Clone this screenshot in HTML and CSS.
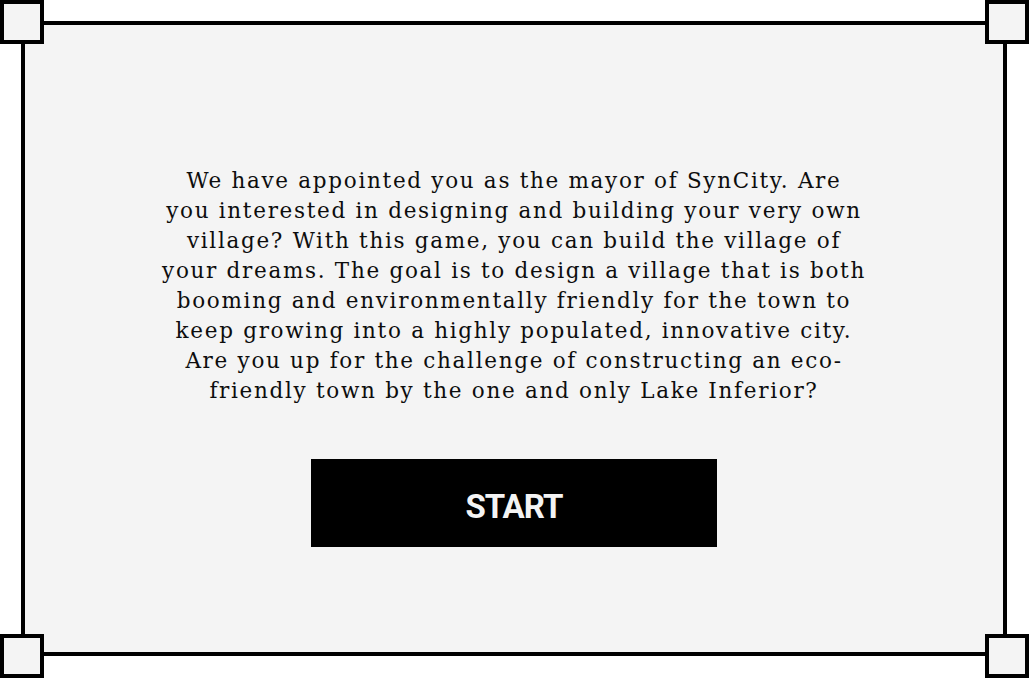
FILE: index.html
```html
<!DOCTYPE html>
<html lang="en">
<head>
<meta charset="utf-8">
<title>SynCity</title>
<link rel="stylesheet" href="styles.css">
</head>
<body>
<div class="frame">
  <span class="corner corner-tl"></span>
  <span class="corner corner-tr"></span>
  <span class="corner corner-bl"></span>
  <span class="corner corner-br"></span>
  <div class="content">
    <p class="intro">We have appointed you as the mayor of SynCity. Are<br>you interested in designing and building your very own<br>village? With this game, you can build the village of<br>your dreams. The goal is to design a village that is both<br>booming and environmentally friendly for the town to<br>keep growing into a highly populated, innovative city.<br>Are you up for the challenge of constructing an eco-<br>friendly town by the one and only Lake Inferior?</p>
    <button class="start" type="button">START</button>
  </div>
</div>
</body>
</html>
```
FILE: styles.css
```css
html, body {
  margin: 0;
  padding: 0;
  background: #ffffff;
}
body {
  width: 1029px;
  height: 678px;
  padding: 21px 22px 22px 21px;
  box-sizing: border-box;
}
.frame {
  position: relative;
  height: 100%;
  box-sizing: border-box;
  border: 4px solid #000;
  background: #f4f4f4;
  display: flex;
  justify-content: center;
}
.corner {
  position: absolute;
  width: 44px;
  height: 44px;
  box-sizing: border-box;
  border: 4px solid #000;
  background: #f4f4f4;
}
.corner-tl { left: -25px; top: -25px; }
.corner-tr { right: -26px; top: -25px; }
.corner-bl { left: -25px; bottom: -26px; }
.corner-br { right: -26px; bottom: -26px; }
.content {
  display: flex;
  flex-direction: column;
  align-items: center;
  padding-top: 141px;
}
.intro {
  margin: 0;
  font-family: "DejaVu Serif", "Liberation Serif", serif;
  font-size: 21.5px;
  letter-spacing: 1.7px;
  line-height: 30px;
  color: #0d0d0d;
  text-align: center;
  white-space: nowrap;
}
.start {
  margin-top: 53px;
  width: 406px;
  height: 88px;
  border: none;
  background: #000;
  color: #f4f4f4;
  font-family: Roboto, "DejaVu Sans", sans-serif;
  font-weight: 700;
  font-size: 33px;
  letter-spacing: -1px;
  padding: 0;
  padding-top: 6px;
  cursor: pointer;
}
```
